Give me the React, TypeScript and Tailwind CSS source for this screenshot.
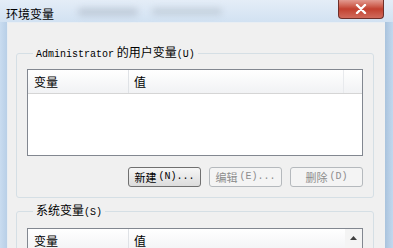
import React from "react";

const cjk = { fontFamily: '"Noto Sans CJK SC", sans-serif' };

function Latin({ children }: { children: React.ReactNode }) {
  return <span className="font-['Liberation_Mono',monospace] text-[10px]">{children}</span>;
}

function ListHeader({ scroll }: { scroll?: boolean }) {
  return (
    <div className="flex h-[24px] border-b border-[#d5d5d5] bg-gradient-to-b from-white to-[#f1f2f4] text-[12px] leading-[24px] text-black">
      <div className="w-[101px] border-r border-[#dfe2e6] pl-[6px]">变量</div>
      <div className="flex-1 pl-[5px]">值</div>
      {!scroll && <div className="w-[19px] border-l border-[#e8eaed]" />}
    </div>
  );
}

function Button({ label, hot, disabled }: { label: string; hot: string; disabled?: boolean }) {
  return (
    <button
      className={
        "flex h-[20px] w-[73px] items-center justify-center rounded-[3px] border text-[11px] leading-none " +
        (disabled
          ? "border-[#b5b9bd] bg-[#f4f4f4] text-[#8d8d8d]"
          : "border-[#707070] bg-gradient-to-b from-[#f6f6f6] to-[#dcdcdc] text-black")
      }
    >
      <span className="mr-[2px]">{label}</span>
      <Latin>({hot})...</Latin>
    </button>
  );
}

export default function App() {
  return (
    <div className="flex h-[248px] w-[393px] flex-col overflow-hidden bg-[#c3d8ee]" style={cjk}>
      {/* title bar */}
      <div className="flex h-[30px] items-start bg-gradient-to-b from-[#e4edf7] to-[#d2e2f2]">
        <div className="pl-[6px] pt-[6px] text-[12px] leading-[16px] text-black">环境变量</div>
        <div className="ml-[24px] mt-[8px] h-[8px] w-[60px] rounded-full bg-[#9aa6b3]/40 blur-[3px]" />
        <div className="ml-[14px] mt-[8px] h-[7px] w-[70px] rounded-full bg-[#9aa6b3]/35 blur-[3px]" />
        <div className="ml-auto mr-[9px] flex h-[19px] w-[46px] items-center justify-center rounded-b-[4px] border border-t-0 border-[#6e2f2a] bg-gradient-to-b from-[#e29a90] via-[#c2402f] to-[#d06a5c]">
          <svg width="12" height="10" viewBox="0 0 12 10">
            <path d="M2 1 L10 9 M10 1 L2 9" stroke="#fff" strokeWidth="2.4" strokeLinecap="round" />
          </svg>
        </div>
      </div>

      <div className="flex flex-1">
        <div className="w-[7px] bg-gradient-to-r from-[#c9dcf0] to-[#b8cfe7]" />
        <div className="flex-1 border-l border-t border-[#e9eef3] bg-[#f0f0f0] pl-[8px] pr-[11px] pt-[21px]">
          {/* user variables */}
          <fieldset className="rounded-[3px] border border-[#d5dfe5] px-[10px] pb-[10px] pt-[6px]">
            <legend className="ml-[6px] px-[3px] text-[12px] leading-[16px] text-black">
              <Latin>Administrator</Latin> 的用户变量<Latin>(U)</Latin>
            </legend>
            <div className="h-[87px] border border-[#828790] bg-white">
              <ListHeader />
            </div>
            <div className="mt-[11px] flex justify-end gap-[8px]">
              <Button label="新建" hot="N" />
              <Button label="编辑" hot="E" disabled />
              <div className="flex h-[20px] w-[73px] items-center justify-center rounded-[3px] border border-[#b5b9bd] bg-[#f4f4f4] text-[11px] leading-none text-[#8d8d8d]">
                <span className="mr-[2px]">删除</span>
                <Latin>(D)</Latin>
              </div>
            </div>
          </fieldset>

          {/* system variables */}
          <fieldset className="mt-[4px] rounded-[3px] border border-[#d5dfe5] px-[10px] pt-[7px]">
            <legend className="ml-[6px] px-[3px] text-[12px] leading-[16px] text-black">
              系统变量<Latin>(S)</Latin>
            </legend>
            <div className="flex h-[60px] border border-[#828790] bg-white">
              <div className="flex-1">
                <ListHeader scroll />
              </div>
              <div className="flex w-[17px] flex-col items-center bg-[#f4f4f4]">
                <div className="flex h-[17px] w-full items-center justify-center">
                  <svg width="7" height="4" viewBox="0 0 7 4">
                    <path d="M0 4 L3.5 0 L7 4 Z" fill="#404040" />
                  </svg>
                </div>
                <div className="mt-[3px] h-[30px] w-[15px] rounded-[2px] border border-[#9a9a9a] bg-gradient-to-r from-[#f4f4f4] to-[#e2e2e2]" />
              </div>
            </div>
          </fieldset>
        </div>
        <div className="w-[8px] bg-gradient-to-r from-[#a9c3dd] to-[#c3d8ee]" />
      </div>
    </div>
  );
}
